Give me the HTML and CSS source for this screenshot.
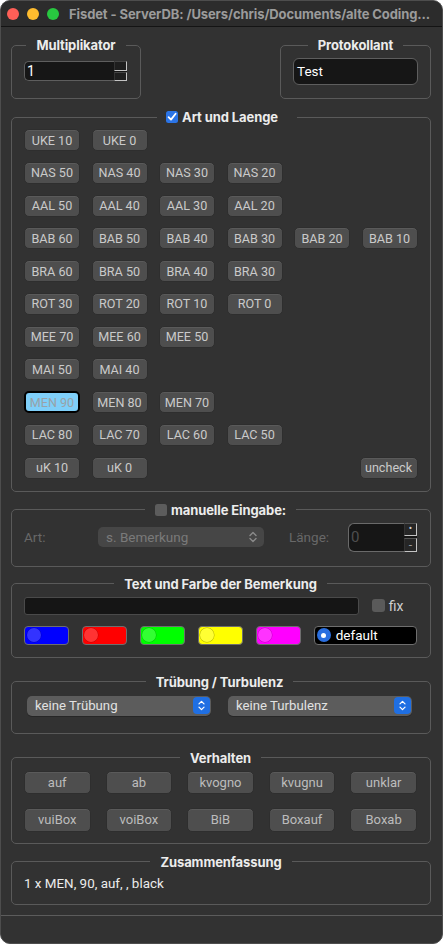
FILE: index.html
```html
<!DOCTYPE html>
<html lang="de">
<head>
<meta charset="utf-8">
<title>Fisdet</title>
<link rel="stylesheet" href="styles.css">
</head>
<body>
<div class="window">
  <header class="titlebar">
    <div class="lights">
      <span class="light red"></span>
      <span class="light yellow"></span>
      <span class="light green"></span>
    </div>
    <div class="title">Fisdet - ServerDB: /Users/chris/Documents/alte Coding...</div>
  </header>

  <main class="content">
    <div class="toprow">
      <fieldset class="group g-multi">
        <legend>Multiplikator</legend>
        <div class="numfield">
          <span class="numval">1</span>
          <span class="stepper"><span class="step"></span><span class="step"></span></span>
        </div>
      </fieldset>
      <fieldset class="group g-proto">
        <legend>Protokollant</legend>
        <div class="textfield">Test</div>
      </fieldset>
    </div>

    <fieldset class="group g-art">
      <legend class="cb-legend legend-art">
        <svg class="cb cb-on" viewBox="0 0 12 12" width="12" height="12"><rect x="0" y="0" width="12" height="12" rx="2.5" fill="#2b74e6"/><path d="M2.6 6.2 L5 8.6 L9.6 2.8" fill="none" stroke="#fff" stroke-width="1.8" stroke-linecap="round" stroke-linejoin="round"/></svg>
        <span>Art und Laenge</span>
      </legend>
      <div class="artrows">
        <div class="artrow"><span class="btn">UKE 10</span><span class="btn">UKE 0</span></div>
        <div class="artrow"><span class="btn">NAS 50</span><span class="btn">NAS 40</span><span class="btn">NAS 30</span><span class="btn">NAS 20</span></div>
        <div class="artrow"><span class="btn">AAL 50</span><span class="btn">AAL 40</span><span class="btn">AAL 30</span><span class="btn">AAL 20</span></div>
        <div class="artrow"><span class="btn">BAB 60</span><span class="btn">BAB 50</span><span class="btn">BAB 40</span><span class="btn">BAB 30</span><span class="btn">BAB 20</span><span class="btn">BAB 10</span></div>
        <div class="artrow"><span class="btn">BRA 60</span><span class="btn">BRA 50</span><span class="btn">BRA 40</span><span class="btn">BRA 30</span></div>
        <div class="artrow"><span class="btn">ROT 30</span><span class="btn">ROT 20</span><span class="btn">ROT 10</span><span class="btn">ROT 0</span></div>
        <div class="artrow"><span class="btn">MEE 70</span><span class="btn">MEE 60</span><span class="btn">MEE 50</span></div>
        <div class="artrow"><span class="btn">MAI 50</span><span class="btn">MAI 40</span></div>
        <div class="artrow"><span class="btn btn-active">MEN 90</span><span class="btn">MEN 80</span><span class="btn">MEN 70</span></div>
        <div class="artrow"><span class="btn">LAC 80</span><span class="btn">LAC 70</span><span class="btn">LAC 60</span><span class="btn">LAC 50</span></div>
        <div class="artrow"><span class="btn">uK 10</span><span class="btn">uK 0</span><span class="btn btn-uncheck">uncheck</span></div>
      </div>
    </fieldset>

    <fieldset class="group g-manual">
      <legend class="cb-legend">
        <span class="cb cb-off"></span>
        <span>manuelle Eingabe:</span>
      </legend>
      <div class="manualrow">
        <span class="dimlabel lbl-art">Art:</span>
        <span class="popup-disabled">
          <span>s. Bemerkung</span>
          <svg class="chev" viewBox="0 0 10 14" width="10" height="14"><path d="M2 5.5 L5 2.5 L8 5.5 M2 8.5 L5 11.5 L8 8.5" fill="none" stroke="#8a8a8a" stroke-width="1.4" stroke-linecap="round" stroke-linejoin="round"/></svg>
        </span>
        <span class="dimlabel lbl-len">Länge:</span>
        <span class="lenfield">
          <span class="lenval">0</span>
          <span class="stepper"><span class="step step-dot">•</span><span class="step step-dash">-</span></span>
        </span>
      </div>
    </fieldset>

    <fieldset class="group g-color">
      <legend>Text und Farbe der Bemerkung</legend>
      <div class="textrow">
        <span class="remarkfield"></span>
        <span class="cb cb-fix"></span>
        <span class="fixlabel">fix</span>
      </div>
      <div class="colorrow">
        <span class="swatch sw-blue"><span class="radio"></span></span>
        <span class="swatch sw-red"><span class="radio"></span></span>
        <span class="swatch sw-green"><span class="radio"></span></span>
        <span class="swatch sw-yellow"><span class="radio"></span></span>
        <span class="swatch sw-magenta"><span class="radio"></span></span>
        <span class="swatch sw-default"><span class="radio radio-on"></span><span class="deflabel">default</span></span>
      </div>
    </fieldset>

    <fieldset class="group g-trueb">
      <legend>Trübung / Turbulenz</legend>
      <div class="popuprow">
        <span class="popup"><span>keine Trübung</span><span class="arrows"><svg viewBox="0 0 10 14" width="9" height="13"><path d="M2.2 5.2 L5 2.4 L7.8 5.2 M2.2 8.8 L5 11.6 L7.8 8.8" fill="none" stroke="#fff" stroke-width="1.4" stroke-linecap="round" stroke-linejoin="round"/></svg></span></span>
        <span class="popup"><span>keine Turbulenz</span><span class="arrows"><svg viewBox="0 0 10 14" width="9" height="13"><path d="M2.2 5.2 L5 2.4 L7.8 5.2 M2.2 8.8 L5 11.6 L7.8 8.8" fill="none" stroke="#fff" stroke-width="1.4" stroke-linecap="round" stroke-linejoin="round"/></svg></span></span>
      </div>
    </fieldset>

    <fieldset class="group g-verh">
      <legend>Verhalten</legend>
      <div class="verhgrid">
        <span class="btn btn-v">auf</span>
        <span class="btn btn-v">ab</span>
        <span class="btn btn-v">kvogno</span>
        <span class="btn btn-v">kvugnu</span>
        <span class="btn btn-v">unklar</span>
        <span class="btn btn-v">vuiBox</span>
        <span class="btn btn-v">voiBox</span>
        <span class="btn btn-v">BiB</span>
        <span class="btn btn-v">Boxauf</span>
        <span class="btn btn-v">Boxab</span>
      </div>
    </fieldset>

    <fieldset class="group g-sum">
      <legend>Zusammenfassung</legend>
      <div class="summary">1 x MEN, 90, auf, , black</div>
    </fieldset>
  </main>

  <footer class="bottombar"></footer>
</div>
</body>
</html>
```

FILE: styles.css
```css
* { box-sizing: border-box; }

html, body {
  margin: 0;
  background: #ffffff;
}

body {
  font-family: Roboto, "Liberation Sans", "DejaVu Sans", sans-serif;
  font-size: 13px;
  color: #e6e6e6;
}

.window {
  width: 443px;
  height: 944px;
  background: #323232;
  border: 1px solid #4d4d4d;
  border-radius: 10px;
  overflow: hidden;
  display: flex;
  flex-direction: column;
}

/* Title bar */
.titlebar {
  flex: none;
  height: 26px;
  background: #2c2c2c;
  border-bottom: 1px solid #141414;
  display: flex;
  align-items: center;
  padding-left: 6px;
}

.lights {
  display: flex;
  gap: 8px;
  flex: none;
}

.light {
  width: 12px;
  height: 12px;
  border-radius: 50%;
}
.red { background: #fe5f57; }
.yellow { background: #febc2e; }
.green { background: #28c840; }

.title {
  margin-left: 10px;
  font-family: Inter, "Liberation Sans", sans-serif;
  font-weight: 700;
  font-size: 13px;
  color: #9b9b9b;
  white-space: nowrap;
  overflow: hidden;
  text-overflow: ellipsis;
  letter-spacing: -0.1px;
}

/* Content */
.content {
  flex: 1;
  display: flex;
  flex-direction: column;
  padding: 10px 11px 0 10px;
}

.group {
  margin: 0;
  padding: 0;
  border: 1px solid #5a5a5a;
  border-radius: 5px;
  min-width: 0;
}

.group > legend {
  margin: 0 auto;
  padding: 0 10px;
  font-family: Inter, "Liberation Sans", sans-serif;
  font-weight: 700;
  font-size: 13px;
  line-height: 16px;
  color: #ececec;
  letter-spacing: -0.1px;
}

.group > .legend-art {
  padding: 0 19px 0 9px;
}

.cb-legend {
  display: flex;
  align-items: center;
  gap: 4px;
}

.cb { display: block; flex: none; }
.cb-off {
  width: 12px;
  height: 12px;
  border-radius: 2.5px;
  background: #5c5c5c;
}

/* Top row */
.toprow {
  display: flex;
  justify-content: space-between;
}

.g-multi {
  width: 130px;
  height: 62px;
  padding: 8px 12px 0 12px;
}

.g-proto {
  width: 151px;
  height: 62px;
  padding: 5px 12px 0 12px;
}

.numfield {
  display: flex;
  width: 103px;
  height: 20px;
}

.numval {
  flex: 1;
  background: #161616;
  border: 1px solid #5e5e5e;
  border-right: none;
  border-radius: 5px 0 0 5px;
  color: #ffffff;
  font-size: 14px;
  line-height: 18px;
  padding-left: 2px;
}

.stepper {
  width: 13px;
  flex: none;
  display: flex;
  flex-direction: column;
  gap: 1px;
  background: #161616;
}

.step {
  flex: 1;
  background: #1e1e1e;
  border-top: 1px solid #444;
  border-left: 1px solid #333;
  border-right: 1px solid #c4c4c4;
  border-bottom: 1px solid #c4c4c4;
  display: flex;
  align-items: center;
  justify-content: center;
  color: #cfcfcf;
  font-size: 11px;
  line-height: 1;
}

.textfield {
  width: 125px;
  height: 27px;
  background: #161616;
  border: 1px solid #5e5e5e;
  border-radius: 6px;
  color: #ffffff;
  font-size: 13.5px;
  line-height: 25px;
  padding-left: 3px;
}

/* Art und Laenge */
.g-art {
  margin-top: 10px;
  padding: 4px 0 12px 12px;
}

.artrows {
  display: flex;
  flex-direction: column;
  gap: 10.75px;
}

.artrow {
  display: grid;
  grid-template-columns: repeat(6, 56px);
  column-gap: 11.5px;
}

.btn {
  height: 22px;
  border-radius: 5px;
  background: #4e4e4e;
  border: 1px solid #2e2e2e;
  box-shadow: inset 0 1px 0 #5a5a5a;
  color: #cacaca;
  font-size: 12.6px;
  display: flex;
  align-items: center;
  justify-content: center;
  white-space: nowrap;
}

.btn-active {
  background: #7fcff9;
  border: 2px solid #000000;
  box-shadow: none;
  color: #98a2a8;
}

.btn-uncheck {
  grid-column: 6;
  justify-self: end;
  width: 58px;
}

/* manuelle Eingabe */
.g-manual {
  margin-top: 10px;
  padding: 5px 13px 14px 12px;
}

.manualrow {
  display: flex;
  align-items: center;
  height: 29px;
}

.dimlabel {
  color: #686868;
  font-size: 13.5px;
}
.lbl-art { width: 74px; }
.lbl-len { width: 59px; margin-left: 25px; }

.popup-disabled {
  width: 166px;
  height: 20px;
  border-radius: 5px;
  background: #464646;
  color: #7a7a7a;
  font-size: 13.5px;
  display: flex;
  align-items: center;
  justify-content: space-between;
  padding: 0 6px 0 8px;
}

.chev { display: block; }

.lenfield {
  display: flex;
  width: 69px;
  height: 29px;
}

.lenval {
  flex: 1;
  background: #161616;
  border: 1px solid #6a6a6a;
  border-right: none;
  border-radius: 6px 0 0 6px;
  color: #4e4e4e;
  font-size: 15px;
  line-height: 27px;
  padding-left: 2px;
}

.lenfield .stepper { gap: 2px; }
.lenfield .step { background: #262626; border-top-color: #555; }
.step-dot { font-size: 10px; }
.step-dash { font-size: 12px; color: #9a9a9a; }

/* Text und Farbe */
.g-color {
  margin-top: 9px;
  padding: 5px 13px 12px 12px;
}

.textrow {
  display: flex;
  align-items: center;
  height: 18px;
}

.remarkfield {
  width: 335.4px;
  height: 18px;
  background: #151515;
  border: 1px solid #4a4a4a;
  border-radius: 3px;
}

.cb-fix {
  width: 13px;
  height: 13px;
  border-radius: 3px;
  background: #5a5a5a;
  margin-left: 12.3px;
}

.fixlabel {
  margin-left: 4px;
  color: #cfcfcf;
  font-size: 14px;
}

.colorrow {
  display: flex;
  gap: 12.6px;
  margin-top: 11px;
}

.swatch {
  width: 45.4px;
  height: 19px;
  border-radius: 4px;
  border: 1px solid #6e6e6e;
  display: flex;
  align-items: center;
  padding-left: 1.5px;
}

.radio {
  width: 14px;
  height: 14px;
  border-radius: 50%;
  background: rgba(255, 255, 255, 0.2);
  box-shadow: 0 0 0 0.5px rgba(0, 0, 0, 0.25);
  flex: none;
}

.sw-blue { background: #0000ff; }
.sw-red { background: #ff0000; }
.sw-green { background: #00ff00; }
.sw-yellow { background: #ffff00; }
.sw-yellow .radio { box-shadow: 0 0 0 0.5px rgba(120, 120, 0, 0.6); }
.sw-magenta { background: #ff00ff; }

.sw-default {
  width: 103.4px;
  background: #000000;
  padding-left: 2px;
}

.radio-on {
  background: #2a6fe0;
  display: flex;
  align-items: center;
  justify-content: center;
}
.radio-on::after {
  content: "";
  width: 5px;
  height: 5px;
  border-radius: 50%;
  background: #ffffff;
}

.deflabel {
  margin-left: 5px;
  color: #ffffff;
  font-size: 13.5px;
}

/* Trübung / Turbulenz */
.g-trueb {
  margin-top: 16px;
  padding: 6px 18px 17px 15px;
}

.popuprow {
  display: flex;
  gap: 17px;
}

.popup {
  flex: 1;
  height: 20px;
  border-radius: 5px;
  background: #5c5c5c;
  box-shadow: 0 1px 0 #262626;
  color: #e2e2e2;
  font-size: 13.2px;
  display: flex;
  align-items: center;
  justify-content: space-between;
  padding: 0 1px 0 8px;
}

.arrows {
  width: 17px;
  height: 17px;
  border-radius: 4px;
  background: #1f6fe3;
  display: flex;
  align-items: center;
  justify-content: center;
}
.arrows svg { display: block; }

/* Verhalten */
.g-verh {
  margin-top: 16px;
  padding: 5px 13px 11px 12px;
}

.verhgrid {
  display: grid;
  grid-template-columns: repeat(5, 66.5px);
  column-gap: 15.1px;
  row-gap: 14px;
}

.btn-v {
  height: 23.6px;
  color: #bcbcbc;
  font-size: 13px;
}

/* Zusammenfassung */
.g-sum {
  margin-top: 10px;
  padding: 6px 12px 12px 12px;
}

.summary {
  font-size: 13.4px;
  line-height: 16px;
  color: #ececec;
}

/* Footer */
.bottombar {
  flex: none;
  height: 28px;
  border-top: 1px solid #5c5c5c;
}
```
